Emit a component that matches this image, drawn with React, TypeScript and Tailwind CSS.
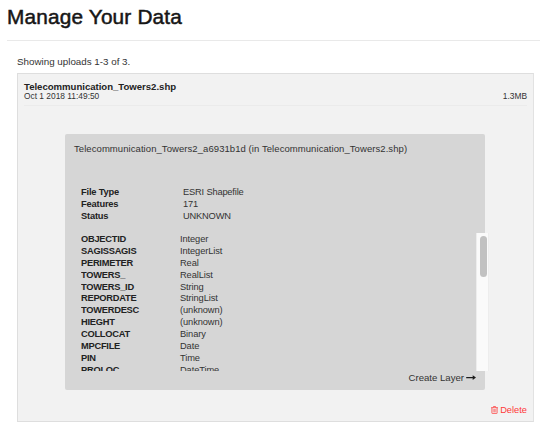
import React from "react";

const summary = [
  ["File Type", "ESRI Shapefile"],
  ["Features", "171"],
  ["Status", "UNKNOWN"],
];

const fields = [
  ["OBJECTID", "Integer"],
  ["SAGISSAGIS", "IntegerList"],
  ["PERIMETER", "Real"],
  ["TOWERS_", "RealList"],
  ["TOWERS_ID", "String"],
  ["REPORDATE", "StringList"],
  ["TOWERDESC", "(unknown)"],
  ["HIEGHT", "(unknown)"],
  ["COLLOCAT", "Binary"],
  ["MPCFILE", "Date"],
  ["PIN", "Time"],
  ["PROLOC", "DateTime"],
];

function TrashIcon() {
  return (
    <svg className="h-[8px] w-[7px]" viewBox="0 0 7 8" fill="none" stroke="currentColor" strokeWidth="0.75">
      <path d="M0.1 1.7H6.9M2.2 1.6L2.5 0.5H4.5L4.8 1.6M0.9 1.7V7Q0.9 7.6 1.5 7.6H5.5Q6.1 7.6 6.1 7V1.7" />
      <path d="M2.3 3V6.4M3.5 3V6.4M4.7 3V6.4" strokeWidth="0.5" />
    </svg>
  );
}

function ArrowIcon() {
  return (
    <svg className="h-[6px] w-[10px]" viewBox="0 0 10 6" fill="#1c1c1c">
      <path d="M0.2 1.9H6.7V0.2L10 2.6L6.7 5V3.3H0.2Z" />
    </svg>
  );
}

export default function App() {
  return (
    <div className="h-[425px] w-[540px] overflow-hidden bg-white pl-[7px] font-['Liberation_Sans',Arial,sans-serif] text-[#333]">
      <h1 className="h-[40px] pt-[4px] text-[20.8px] leading-[26px] tracking-[0.17px] whitespace-nowrap text-[#161616] [-webkit-text-stroke:0.5px_#161616]">
        Manage Your Data
      </h1>
      <div className="h-px bg-[#e9e9e9]" />
      <main className="w-[527px] pl-[10px]">
        <p className="h-[32px] pt-[15px] text-[9.8px] leading-[12px]">Showing uploads 1-3 of 3.</p>
        <section className="h-[349px] border border-[#dedede] border-r-[#e2e2e2] bg-[#f2f2f2] px-[6px]">
          <header className="flex h-[32px] items-end justify-between border-b border-[#ebebeb] pb-[4px]">
            <div>
              <h2 className="text-[9.6px] leading-[11px] font-bold tracking-[-0.02px] text-[#222]">Telecommunication_Towers2.shp</h2>
              <p className="text-[8.4px] leading-[9px]">Oct 1 2018 11:49:50</p>
            </div>
            <span className="text-[8.4px] leading-[9px]">1.3MB</span>
          </header>
          <article className="mt-[28px] ml-[41px] h-[256px] w-[420px] rounded-[2px] bg-[#d6d6d6] pt-[9px]">
            <h3 className="pl-[9px] text-[9.5px] leading-[12px] tracking-[0.07px] whitespace-nowrap">
              Telecommunication_Towers2_a6931b1d (in Telecommunication_Towers2.shp)
            </h3>
            <dl className="mt-[31px] ml-[16px] text-[9.3px] leading-[12px] tracking-[-0.18px]">
              {summary.map(([k, v]) => (
                <div key={k} className="flex">
                  <dt className="w-[102px] font-bold text-[#222]">{k}</dt>
                  <dd>{v}</dd>
                </div>
              ))}
            </dl>
            <div className="mt-[11px] ml-[16px] flex h-[138px] w-[408px] overflow-hidden">
              <dl className="w-[395px] shrink-0 text-[9.3px] leading-[12px]">
                {fields.map(([k, v]) => (
                  <div key={k} className="flex h-[11.9px]">
                    <dt className="w-[99px] font-bold tracking-[-0.25px] text-[#222]">{k}</dt>
                    <dd className="tracking-[-0.1px]">{v}</dd>
                  </div>
                ))}
              </dl>
              <div className="w-[13px] shrink-0 border-x border-[#ededed] bg-[#fafafa] pt-[3px] pl-[2.5px]">
                <div className="h-[41px] w-[7.5px] rounded-full bg-[#c1c1c1]" />
              </div>
            </div>
            <div className="flex h-[13px] items-center justify-end gap-[2px] pr-[9px] text-[9.6px] leading-[12px]">
              <span>Create Layer</span>
              <ArrowIcon />
            </div>
          </article>
          <div className="mt-[14px] flex h-[12px] items-center justify-end gap-[2.5px] text-[9.3px] leading-[12px] text-[#ff3838]">
            <TrashIcon />
            <span>Delete</span>
          </div>
        </section>
      </main>
    </div>
  );
}
